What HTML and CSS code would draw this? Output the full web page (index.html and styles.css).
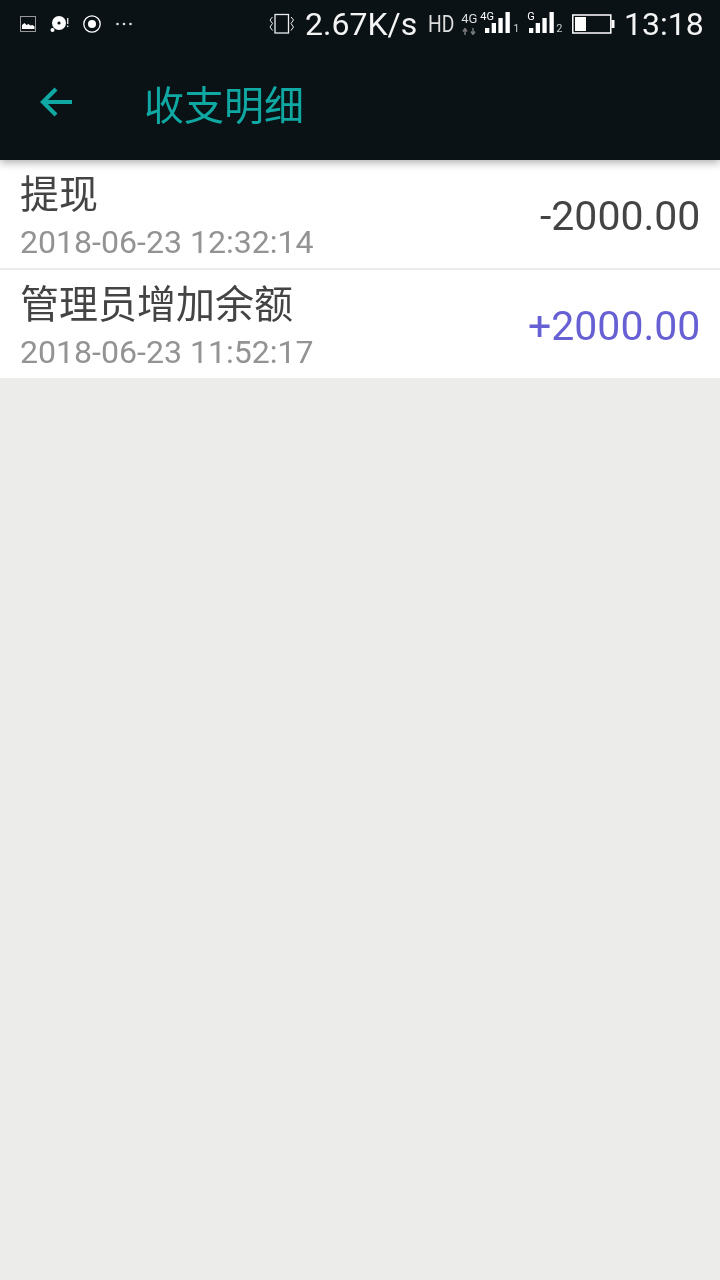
FILE: index.html
```html
<!DOCTYPE html>
<html lang="zh">
<head>
<meta charset="utf-8">
<title>收支明细</title>
<link rel="stylesheet" href="styles.css">
</head>
<body>
<header class="top">
  <div class="status">
    <div class="status-left">
      <svg class="i-img" width="16" height="16" viewBox="0 0 16 16"><rect x="0.500" y="0.500" width="15" height="15" fill="#0a1216" stroke="#999"/><path d="M2 13V9l2.500-2 2 2 2-1 2 1.500 2-.5 2 1.500V13z" fill="#fff"/></svg>
      <svg class="i-disc" width="20" height="18" viewBox="0 0 20 18"><circle cx="9" cy="8" r="7" fill="#fff"/><circle cx="9" cy="8" r="1.600" fill="#0a1216"/><circle cx="2.500" cy="15" r="2" fill="#fff"/><rect x="17" y="3" width="1.400" height="6" fill="#ddd"/><rect x="17" y="10.500" width="1.400" height="1.600" fill="#ddd"/></svg>
      <svg class="i-rec" width="18" height="18" viewBox="0 0 18 18"><circle cx="9" cy="9" r="8.200" fill="none" stroke="#fff" stroke-width="1.300"/><circle cx="9" cy="9" r="4" fill="#fff"/></svg>
      <svg class="i-more" width="16" height="4" viewBox="0 0 16 4"><circle cx="1.500" cy="2" r="1.300" fill="#ddd"/><circle cx="8" cy="2" r="1.300" fill="#ddd"/><circle cx="14.500" cy="2" r="1.300" fill="#ddd"/></svg>
    </div>
    <div class="status-right">
      <svg class="i-vib" width="26" height="24" viewBox="0 0 26 24"><rect x="6" y="2.500" width="13.500" height="18.500" fill="none" stroke="#eee" stroke-width="1.300"/><path d="M3.500 5L1 8l2.500 3.500L1 15l2.500 3.500M22 5l2.500 3-2.500 3.500 2.500 3.500-2.500 3.500" fill="none" stroke="#eee" stroke-width="1"/></svg>
      <span class="speed">2.67K/s</span>
      <span class="hd">HD</span>
      <div class="net">
        <span class="net-label">4G</span>
        <svg width="16" height="7" viewBox="0 0 16 7"><path d="M4 7V2M2 3.500l2-3 2 3M12 0v5M10 3.500l2 3 2-3" fill="none" stroke="#777" stroke-width="1.500"/></svg>
      </div>
      <div class="sim sim-one">
        <span class="sim-label">4G</span>
        <svg class="sim-bars" width="25" height="21" viewBox="0 0 25 21"><path d="M0 16h4.300v5H0zM6.700 11H11v10H6.700zM13.400 6h4.300v15h-4.300zM20.500 0h4.300v21h-4.300z" fill="#fff"/></svg>
        <span class="sim-no">1</span>
      </div>
      <div class="sim sim-two">
        <span class="sim-label">G</span>
        <svg class="sim-bars" width="25" height="21" viewBox="0 0 25 21"><path d="M0 16h4.300v5H0zM6.700 11H11v10H6.700zM13.400 6h4.300v15h-4.300zM20.500 0h4.300v21h-4.300z" fill="#fff"/></svg>
        <span class="sim-no">2</span>
      </div>
      <svg class="i-bat" width="43" height="20" viewBox="0 0 43 20"><rect x="0.800" y="1" width="38" height="18" fill="none" stroke="#fff" stroke-width="1.500"/><rect x="3" y="3" width="11" height="14" fill="#fff"/><rect x="39.500" y="6" width="3" height="8" fill="#fff"/></svg>
      <span class="clock">13:18</span>
    </div>
  </div>
  <div class="bar">
    <svg class="back" width="36" height="32" viewBox="0 0 36 32"><path d="M34 16H5M18 3L5 16l13 13" fill="none" stroke="#0fa8a2" stroke-width="4.200"/></svg>
    <h1 class="title">收支明细</h1>
  </div>
</header>
<main class="list">
  <div class="row">
    <div class="info">
      <div class="name">提现</div>
      <div class="date">2018-06-23 12:32:14</div>
    </div>
    <div class="amount">-2000.00</div>
  </div>
  <div class="row">
    <div class="info">
      <div class="name">管理员增加余额</div>
      <div class="date">2018-06-23 11:52:17</div>
    </div>
    <div class="amount plus">+2000.00</div>
  </div>
</main>
</body>
</html>
```
FILE: styles.css
```css
* { box-sizing: border-box; margin: 0; padding: 0; }
html, body { height: 100%; }
body {
  background: #ececea;
  font-family: Roboto, "Noto Sans CJK SC", sans-serif;
  overflow: hidden;
}
.top {
  height: 160px;
  background: #0a1216;
  box-shadow: 0 3px 8px rgba(0, 0, 0, 0.3);
  position: relative;
  z-index: 1;
}
.status {
  height: 48px;
  display: flex;
  align-items: center;
  justify-content: space-between;
  padding: 0 16px 0 20px;
  color: #fff;
}
.status-left, .status-right { display: flex; align-items: center; }
.i-disc { margin-left: 14px; }
.i-rec { margin-left: 13px; }
.i-more { margin-left: 15px; }
.speed { font-size: 32px; margin-left: 10px; color: #f4f4f4; will-change: transform; }
.hd { font-size: 23px; margin-left: 11px; color: #ddd; transform: scaleX(0.84); transform-origin: left center; width: 26px; }
.net { width: 18px; height: 22px; margin-left: 6px; display: flex; flex-direction: column; align-items: center; gap: 4px; }
.net-label { font-size: 13px; line-height: 11px; color: #ddd; }
.sim { position: relative; display: flex; align-items: flex-end; height: 21px; margin-top: -3px; }
.sim-one { margin-left: 2px; width: 38px; }
.sim-two { margin-left: 9px; width: 36px; }
.sim-bars { flex: none; }
.sim-one .sim-bars { margin-left: 5px; }
.sim-two .sim-bars { margin-left: 2px; }
.sim-label { position: absolute; left: 0; top: -1px; font-size: 11px; line-height: 12px; color: #fff; }
.sim-no { font-size: 11px; line-height: 8px; color: #ccc; margin-left: 3px; }
.sim-two .sim-no { margin-left: 2px; }
.i-bat { margin-left: 9px; }
.clock { font-size: 32px; margin-left: 9px; color: #f4f4f4; will-change: transform; }
.bar { height: 112px; display: flex; align-items: center; padding: 0 0 2px 38px; }
.back { flex: none; margin-bottom: 2px; }
.title {
  margin-left: 70px;
  font-size: 40px;
  font-weight: 400;
  color: #0fa8a2;
  font-family: "Noto Sans CJK SC", sans-serif;
  will-change: transform;
}
.row {
  height: 110px;
  background: #fff;
  border-bottom: 2px solid #ebebeb;
  display: flex;
  align-items: flex-start;
  justify-content: space-between;
  padding: 6px 20px 0;
}
.row:last-child { height: 108px; border-bottom: 0; }
.info, .amount { will-change: transform; }
.name {
  font-size: 39px;
  line-height: 50px;
  color: #444;
  font-family: "Noto Sans CJK SC", sans-serif;
}
.date { font-size: 32.1px; line-height: 52px; color: #939393; }
.amount { font-size: 41px; line-height: 100px; color: #444; }
.plus { color: #6660d4; }
```
